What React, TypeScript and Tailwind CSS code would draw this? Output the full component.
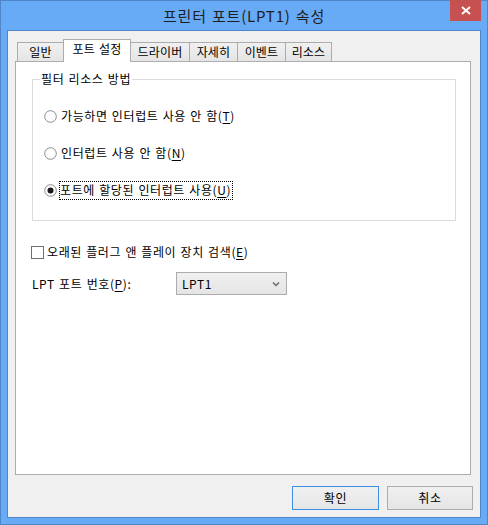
const tabs = [
  { label: "일반", w: "w-[47px]" },
  { label: "포트 설정", w: "w-[68px]", active: true },
  { label: "드라이버", w: "w-[60px]" },
  { label: "자세히", w: "w-[49px]" },
  { label: "이벤트", w: "w-[49px]" },
  { label: "리소스", w: "w-[47px]" },
];

function Radio({ checked }: { checked?: boolean }) {
  return (
    <svg width="13" height="13" viewBox="0 0 13 13" className="shrink-0">
      <circle cx="6.5" cy="6.5" r="5.8" fill="#fff" stroke="#8a8a8a" strokeWidth="1" />
      {checked && <circle cx="6.5" cy="6.5" r="3" fill="#1a1a1a" />}
    </svg>
  );
}

function Key({ k }: { k: string }) {
  return (
    <>
      (<span className="underline underline-offset-2">{k}</span>)
    </>
  );
}

export default function App() {
  return (
    <div className="flex h-[525px] w-[488px] flex-col border border-[#4f86c9] bg-[#67aaf5] font-['Noto_Sans_CJK_KR',sans-serif] text-[12px] tracking-[0.6px] text-black [word-spacing:1px]">
      {/* title bar */}
      <div className="relative flex h-[29px] shrink-0 items-center justify-center">
        <span className="text-[15px] leading-5 tracking-[0.8px] text-[#1e1e1e]">프린터 포트(LPT1) 속성</span>
        <div className="absolute right-[6px] top-[-1px] flex h-[21px] w-[31px] items-center justify-center bg-[#c75050]">
          <svg width="10" height="9" viewBox="0 0 10 9">
            <path d="M1 1 L9 8 M9 1 L1 8" stroke="#fff" strokeWidth="2" />
          </svg>
        </div>
      </div>

      <div className="mx-[6px] flex flex-1 flex-col border border-[#4f86c9] bg-[#f0f0f0]">
        <div className="flex flex-col px-[7px] pt-[8px]">
          {/* tabs */}
          <div className="ml-[2px] flex h-[22px] items-end tracking-[0.2px]">
            {tabs.map((t, i) =>
              t.active ? (
                <div
                  key={t.label}
                  className={`relative z-10 -mb-px flex h-[23px] items-start justify-center border border-b-0 border-[#acacac] bg-white pt-[1px] leading-4 ${t.w} ${i ? "-ml-px" : ""}`}
                >
                  {t.label}
                </div>
              ) : (
                <div
                  key={t.label}
                  className={`flex h-[19px] items-center justify-center border border-b-0 border-[#acacac] bg-gradient-to-b from-[#f0f0f0] to-[#e5e5e5] leading-4 ${t.w} ${i ? "-ml-px" : ""}`}
                >
                  {t.label}
                </div>
              ),
            )}
          </div>

          {/* panel */}
          <div className="flex h-[414px] w-[456px] flex-col border border-[#acacac] bg-white">
            <div className="ml-[16px] mt-[17px] flex h-[142px] w-[424px] flex-col border border-[#dcdcdc]">
              <span className="-mt-[9px] ml-[7px] self-start bg-white px-[1px] leading-4">필터 리소스 방법</span>
              <div className="ml-[11px] mt-[19px] flex flex-col gap-[17px]">
                <div className="flex h-[20px] items-center gap-[3px]">
                  <Radio />
                  <span className="border border-transparent leading-4">
                    가능하면 인터럽트 사용 안 함<Key k="T" />
                  </span>
                </div>
                <div className="flex h-[20px] items-center gap-[3px]">
                  <Radio />
                  <span className="border border-transparent leading-4">
                    인터럽트 사용 안 함<Key k="N" />
                  </span>
                </div>
                <div className="flex h-[20px] items-center gap-[2px]">
                  <Radio checked />
                  <span className="flex h-[19px] items-center border border-dotted border-black pr-[1px] leading-4">
                    포트에 할당된 인터럽트 사용<Key k="U" />
                  </span>
                </div>
              </div>
            </div>

            <div className="ml-[15px] mt-[23px] flex h-[16px] items-center gap-[3px]">
              <div className="h-[13px] w-[13px] shrink-0 border border-[#707070] bg-white" />
              <span className="leading-4">
                오래된 플러그 앤 플레이 장치 검색<Key k="E" />
              </span>
            </div>

            <div className="ml-[16px] mt-[12px] flex h-[23px] items-center">
              <span className="w-[144px] leading-4">
                LPT 포트 번호<Key k="P" />:
              </span>
              <div className="flex h-[23px] w-[111px] items-center justify-between border border-[#acacac] bg-gradient-to-b from-[#f0f0f0] to-[#e5e5e5] pl-[5px] pr-[6px]">
                <span className="leading-4">LPT1</span>
                <svg width="8" height="6" viewBox="0 0 8 6">
                  <path d="M1 1.5 L4 4.5 L7 1.5" fill="none" stroke="#6b6b6b" strokeWidth="1.5" />
                </svg>
              </div>
            </div>
          </div>
        </div>

        {/* buttons */}
        <div className="mt-[11px] flex justify-end gap-2 pr-[7px]">
          <button
            type="button"
            className="flex h-[24px] w-[87px] items-center justify-center border border-[#3c8fe4] bg-gradient-to-b from-[#f0f0f0] to-[#e5e5e5] leading-4"
          >
            확인
          </button>
          <button
            type="button"
            className="flex h-[24px] w-[86px] items-center justify-center border border-[#acacac] bg-gradient-to-b from-[#f0f0f0] to-[#e5e5e5] leading-4"
          >
            취소
          </button>
        </div>
      </div>
      <div className="h-[6px] shrink-0" />
    </div>
  );
}
